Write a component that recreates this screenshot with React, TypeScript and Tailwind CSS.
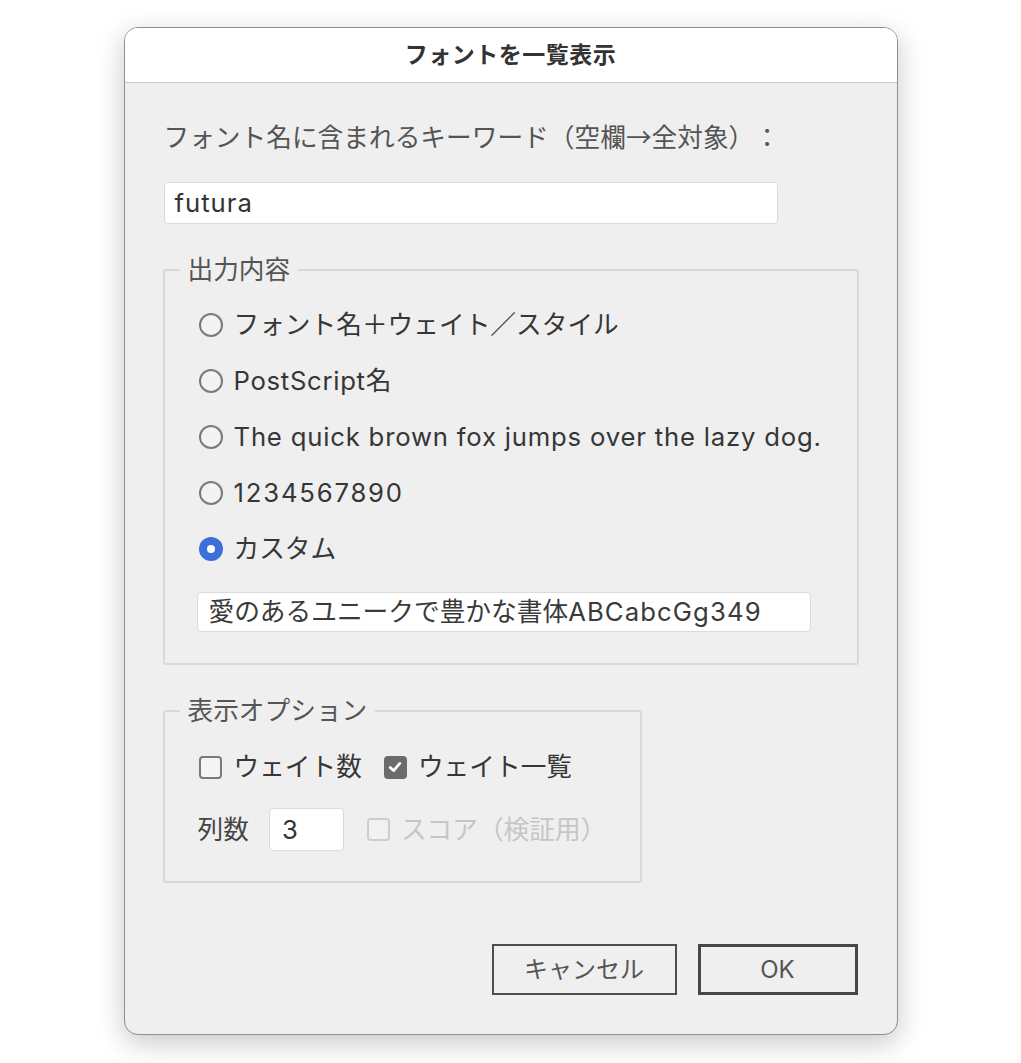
import React from "react";

const FONT = "font-['Inter','Noto_Sans_CJK_JP',sans-serif]";

function Radio({ checked, label }: { checked?: boolean; label: React.ReactNode }) {
  return (
    <div className="flex h-[56px] items-center">
      {checked ? (
        <span className="ml-[2px] flex h-[24px] w-[24px] shrink-0 items-center justify-center rounded-full bg-[#3b6fd9]">
          <span className="h-[8px] w-[8px] rounded-full bg-white" />
        </span>
      ) : (
        <span className="ml-[2px] block h-[24px] w-[24px] shrink-0 rounded-full border-2 border-[#7a7a7a] bg-[#f3f3f3]" />
      )}
      <span className="ml-[11px] text-[#363636]">{label}</span>
    </div>
  );
}

function Check({ checked, disabled }: { checked?: boolean; disabled?: boolean }) {
  if (checked) {
    return (
      <span className="flex h-[23px] w-[23px] shrink-0 items-center justify-center rounded-[4px] bg-[#6b6b6b]">
        <svg width="16" height="16" viewBox="0 0 16 16" fill="none">
          <path d="M3.2 8.4 L6.6 11.6 L12.8 4.4" stroke="white" strokeWidth="2.8" strokeLinecap="round" strokeLinejoin="round" />
        </svg>
      </span>
    );
  }
  return (
    <span
      className={
        disabled
          ? "block h-[23px] w-[23px] shrink-0 rounded-[4px] border-2 border-[#cdcdcd] bg-[#f2f2f2]"
          : "block h-[23px] w-[23px] shrink-0 rounded-[4px] border-2 border-[#7a7a7a] bg-[#f5f5f5]"
      }
    />
  );
}

export default function App() {
  return (
    <div className={`min-h-[1063px] w-full bg-white pt-[27px] ${FONT} [text-spacing-trim:space-all]`}>
      <div className="mx-auto flex h-[1008px] w-[774px] flex-col overflow-hidden rounded-[14px] border border-[#8e8e8e] bg-[#efefef] shadow-[0_8px_28px_rgba(0,0,0,0.22)]">
        {/* title bar */}
        <div className="flex h-[55px] shrink-0 items-center justify-center border-b border-[#c9c9c9] bg-white">
          <span className="text-[23px] font-bold tracking-[0.5px] text-[#333]">フォントを一覧表示</span>
        </div>

        {/* body */}
        <div className="flex flex-1 flex-col px-[38px] text-[25.7px] leading-[30px]">
          <div className="ml-[1px] mt-[38px] text-[#545454]">
            フォント名に含まれるキーワード（空欄<span className="font-['Noto_Sans_CJK_JP']">→</span>全対象）：
          </div>

          <div className="ml-[1px] mt-[29px] flex h-[42px] w-[614px] items-center rounded-[4px] border border-[#dadada] bg-white px-[10px] text-[#333]">
            <span className="tracking-[1px]">futura</span>
          </div>

          <fieldset className="mt-[31px] rounded-[3px] border-2 border-[#d9d9d9] p-0">
            <legend className="ml-[15px] px-[8px] text-[#555]">出力内容</legend>
            <div className="pl-[32px] pt-[12px] pb-[31px]">
              <Radio label="フォント名＋ウェイト／スタイル" />
              <Radio label={<><span className="tracking-[0.7px]">PostScript</span>名</>} />
              <Radio label={<span className="tracking-[0.8px]">The quick brown fox jumps over the lazy dog.</span>} />
              <Radio label={<span className="tracking-[1.8px]">1234567890</span>} />
              <Radio checked label="カスタム" />
              <div className="mt-[15px] flex h-[40px] w-[614px] items-center rounded-[4px] border border-[#dadada] bg-white px-[11px] text-[#3a3a3a]">
                愛のあるユニークで豊かな書体<span className="tracking-[1.1px]">ABCabcGg349</span>
              </div>
            </div>
          </fieldset>

          <fieldset className="mt-[31px] w-[479px] rounded-[3px] border-2 border-[#d9d9d9] p-0">
            <legend className="ml-[15px] px-[8px] text-[#555]">表示オプション</legend>
            <div className="pl-[34px] pt-[13px] pb-[30px]">
              <div className="flex h-[56px] items-center">
                <Check />
                <span className="ml-[12px] text-[#363636]">ウェイト数</span>
                <span className="ml-[22px] flex">
                  <Check checked />
                </span>
                <span className="ml-[11px] text-[#363636]">ウェイト一覧</span>
              </div>
              <div className="mt-[13px] flex h-[43px] items-center">
                <span className="-ml-[1px] text-[#444]">列数</span>
                <div className="ml-[20px] flex h-[43px] w-[75px] items-center rounded-[4px] border border-[#dadada] bg-white px-[12px] text-[#333]">
                  3
                </div>
                <span className="ml-[23px] flex">
                  <Check disabled />
                </span>
                <span className="ml-[11px] text-[#c6c6c6]">スコア（検証用）</span>
              </div>
            </div>
          </fieldset>

          <div className="mt-[61px] flex justify-end gap-[21px] pr-[1px]">
            <button className="flex h-[51px] w-[185px] items-center justify-center border-2 border-[#4d4d4d] bg-[#efefef] text-[24px] text-[#555]">
              キャンセル
            </button>
            <button className="flex h-[51px] w-[160px] items-center justify-center border-[3px] border-[#474747] bg-[#efefef] text-[24px] text-[#555]">
              OK
            </button>
          </div>
        </div>
      </div>
    </div>
  );
}
